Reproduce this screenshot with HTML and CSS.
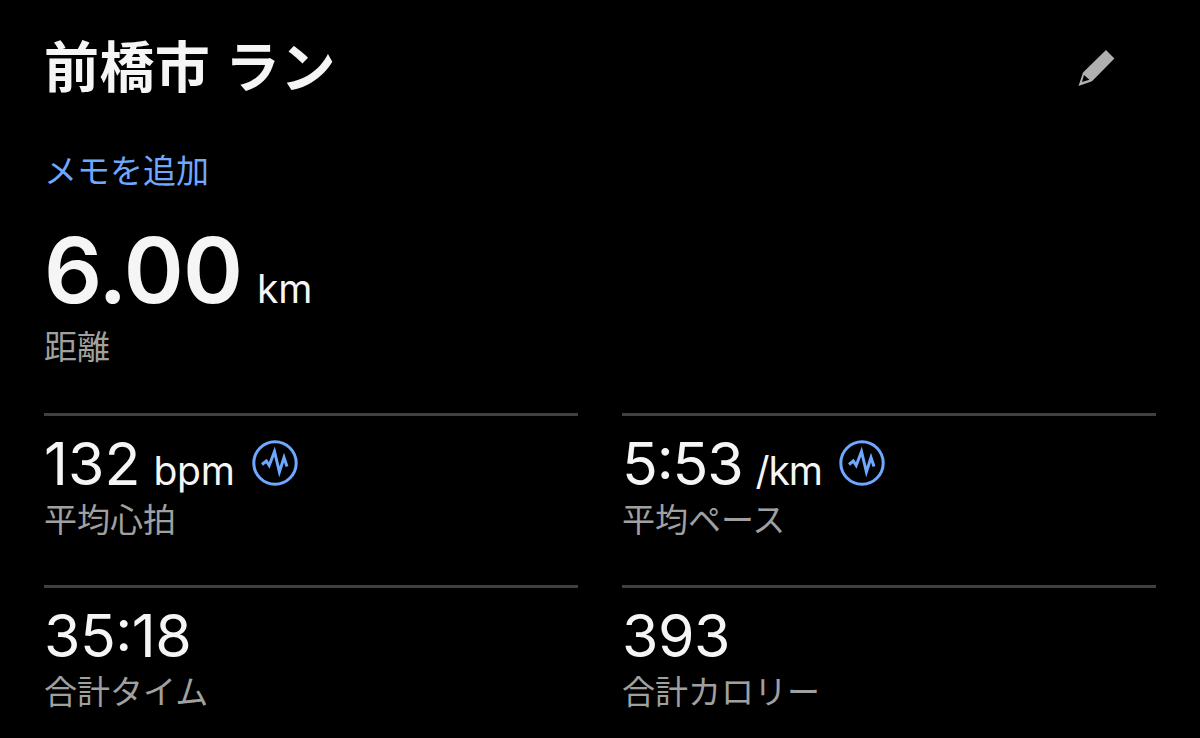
FILE: index.html
```
<!DOCTYPE html>
<html lang="ja">
<head>
    <meta charset="UTF-8">
    <meta name="viewport" content="width=device-width, initial-scale=1.0">
    <title>前橋市 ラン</title>
    <link rel="stylesheet" href="styles.css">
</head>
<body>
<main class="activity">
    <header class="activity-header">
        <h1>前橋市 ラン</h1>
        <svg class="edit-icon" viewBox="0 0 40 40">
            <path fill="#b0b0b0" fill-rule="evenodd" d="M28 1 L36.4 9.5 L14 32.2 L0.5 37 L5 23.5 Z M6 26 L4 33 L11.4 30.8 Z"/>
        </svg>
    </header>

    <a class="memo-link">メモを追加</a>

    <section class="distance">
        <div class="value">6.00<span class="unit">km</span></div>
        <div class="label">距離</div>
    </section>

    <section class="stats">
        <div class="stat">
            <div class="value heart-rate">132<span class="unit">bpm</span>
                <svg class="pulse-icon" viewBox="0 0 46 46">
                    <circle cx="23" cy="23" r="21.2"/>
                    <path d="M10 24.5 L14.3 21 L17.2 25.5 L22.5 11.5 L27.4 32 L32 17.5 L35 26.5"/>
                </svg>
            </div>
            <div class="label">平均心拍</div>
        </div>
        <div class="stat">
            <div class="value pace"><span class="time">5:53</span><span class="unit">/km</span>
                <svg class="pulse-icon" viewBox="0 0 46 46">
                    <circle cx="23" cy="23" r="21.2"/>
                    <path d="M10 24.5 L14.3 21 L17.2 25.5 L22.5 11.5 L27.4 32 L32 17.5 L35 26.5"/>
                </svg>
            </div>
            <div class="label">平均ペース</div>
        </div>
        <div class="stat">
            <div class="value"><span class="time">35:18</span></div>
            <div class="label">合計タイム</div>
        </div>
        <div class="stat">
            <div class="value">393</div>
            <div class="label">合計カロリー</div>
        </div>
    </section>
</main>
</body>
</html>
```
FILE: styles.css
```
* {
    box-sizing: border-box;
}
body {
    margin: 0;
    background-color: #000;
    color: #f5f5f5;
    font-family: Inter, 'Noto Sans CJK JP', sans-serif;
}
.activity {
    height: 738px;
    padding: 32px 44px 0;
    overflow: hidden;
}
.activity-header {
    display: flex;
    justify-content: space-between;
    height: 64px;
    padding-right: 38px;
}
h1 {
    margin: 0;
    font-family: 'Noto Sans CJK JP', sans-serif;
    font-size: 55px;
    font-weight: 700;
    line-height: 62px;
    letter-spacing: 0.4px;
    word-spacing: 2px;
}
.edit-icon {
    width: 40px;
    height: 40px;
    margin-top: 17px;
}
.memo-link {
    display: block;
    margin-top: 53px;
    color: #6ea8ff;
    font-family: 'Noto Sans CJK JP', sans-serif;
    font-size: 33px;
    font-weight: 400;
    line-height: 40px;
}
.value {
    display: flex;
    align-items: baseline;
    height: 60px;
    font-size: 59px;
    line-height: 60px;
    letter-spacing: -0.5px;
}
/* colon centred between the digits */
.time {
    font-feature-settings: 'case';
}
.unit {
    margin-left: 15px;
    font-size: 39px;
    font-weight: 400;
    letter-spacing: 0;
}
.label {
    color: #a0a0a0;
    font-family: 'Noto Sans CJK JP', sans-serif;
    font-size: 33px;
    font-weight: 400;
    line-height: 40px;
}
.distance {
    margin-top: 36px;
}
.distance .value {
    height: 90px;
    margin-bottom: 10px;
    font-size: 91px;
    font-weight: 600;
    line-height: 90px;
    letter-spacing: -1px;
}
.stats {
    display: grid;
    grid-template-columns: 1fr 1fr;
    grid-auto-rows: 172px;
    column-gap: 44px;
    margin-top: 48px;
}
.stat {
    border-top: 3px solid #404040;
    padding-top: 18px;
}
.stat .label {
    margin-top: 4px;
}
.heart-rate {
    letter-spacing: 0;
}
.heart-rate .unit {
    margin-left: 13px;
    letter-spacing: -0.2px;
}
.pace {
    letter-spacing: -1.2px;
}
.pace .unit {
    margin-left: 13px;
    letter-spacing: -1px;
}
.pulse-icon {
    align-self: center;
    width: 46px;
    height: 46px;
    margin: 0 0 2px 17px;
    fill: none;
    stroke: #6ea8ff;
    stroke-width: 3;
}
```
